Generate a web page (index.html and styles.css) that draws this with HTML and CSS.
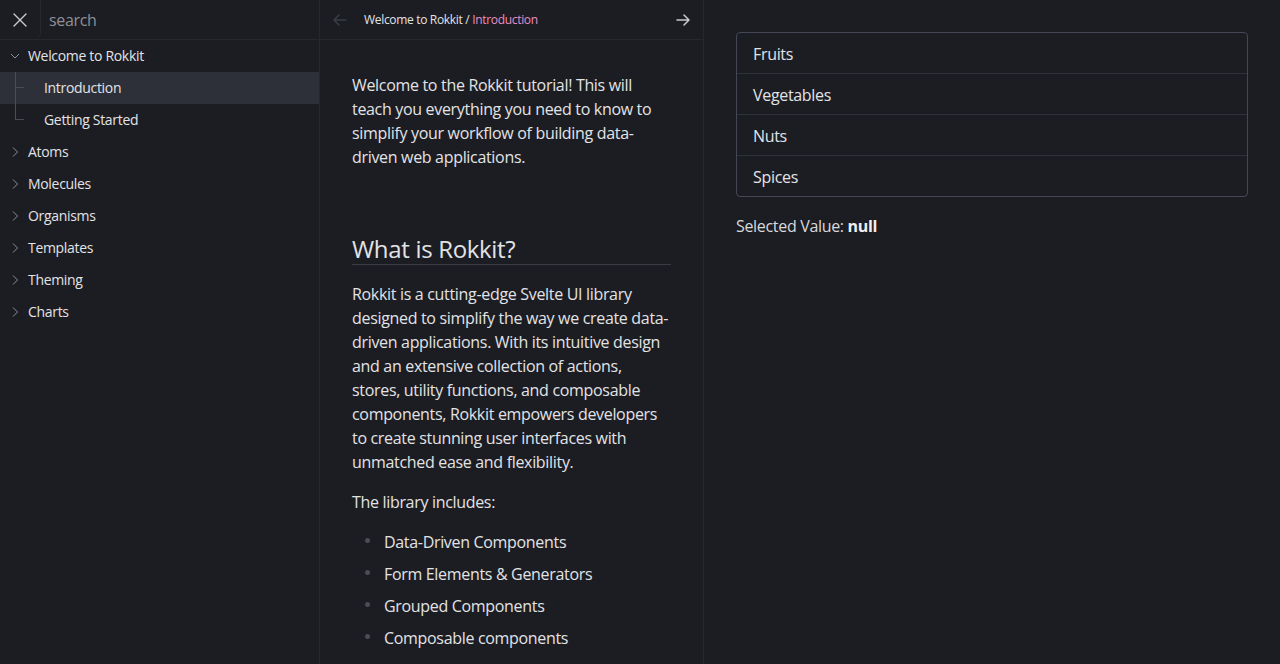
FILE: index.html
```html
<!DOCTYPE html>
<html>
<head>
<meta charset="utf-8">
<link rel="stylesheet" href="styles.css">
</head>
<body>
<div class="app">
  <aside class="sidebar">
    <div class="search-bar">
      <button class="close-btn" aria-label="close">
        <svg width="16" height="16" viewBox="0 0 16 16"><path d="M2 2L14 14M14 2L2 14" stroke="#c8cad0" stroke-width="1.4" fill="none" stroke-linecap="round"/></svg>
      </button>
      <div class="search-input">search</div>
    </div>
    <nav class="tree">
      <div class="node open">
        <div class="row">
          <svg class="chev" width="10" height="10" viewBox="0 0 10 10"><path d="M1 3L5 7L9 3" stroke="#8a8e98" stroke-width="1" fill="none"/></svg>
          <span>Welcome to Rokkit</span>
        </div>
        <div class="children">
          <div class="row child active"><span class="tick"></span><span>Introduction</span></div>
          <div class="row child"><span class="tick"></span><span>Getting Started</span></div>
        </div>
      </div>
      <div class="row"><svg class="chev" width="10" height="10" viewBox="0 0 10 10"><path d="M3 0.5L7.5 5L3 9.5" stroke="#8a8e98" stroke-width="1" fill="none"/></svg><span>Atoms</span></div>
      <div class="row"><svg class="chev" width="10" height="10" viewBox="0 0 10 10"><path d="M3 0.5L7.5 5L3 9.5" stroke="#8a8e98" stroke-width="1" fill="none"/></svg><span>Molecules</span></div>
      <div class="row"><svg class="chev" width="10" height="10" viewBox="0 0 10 10"><path d="M3 0.5L7.5 5L3 9.5" stroke="#8a8e98" stroke-width="1" fill="none"/></svg><span>Organisms</span></div>
      <div class="row"><svg class="chev" width="10" height="10" viewBox="0 0 10 10"><path d="M3 0.5L7.5 5L3 9.5" stroke="#8a8e98" stroke-width="1" fill="none"/></svg><span>Templates</span></div>
      <div class="row"><svg class="chev" width="10" height="10" viewBox="0 0 10 10"><path d="M3 0.5L7.5 5L3 9.5" stroke="#8a8e98" stroke-width="1" fill="none"/></svg><span>Theming</span></div>
      <div class="row"><svg class="chev" width="10" height="10" viewBox="0 0 10 10"><path d="M3 0.5L7.5 5L3 9.5" stroke="#8a8e98" stroke-width="1" fill="none"/></svg><span>Charts</span></div>
    </nav>
  </aside>

  <main class="content">
    <header class="crumbs">
      <svg class="nav-arrow prev" width="16" height="16" viewBox="0 0 16 16"><path d="M14 8H2M7 3L2 8L7 13" stroke="#3a3d46" stroke-width="1.5" fill="none" stroke-linecap="round" stroke-linejoin="round"/></svg>
      <div class="path">Welcome to Rokkit / <span class="current">Introduction</span></div>
      <svg class="nav-arrow next" width="16" height="16" viewBox="0 0 16 16"><path d="M2 8H14M9 3L14 8L9 13" stroke="#c8cad0" stroke-width="1.5" fill="none" stroke-linecap="round" stroke-linejoin="round"/></svg>
    </header>
    <article class="doc">
      <p>Welcome to the Rokkit tutorial! This will teach you everything you need to know to simplify your workflow of building data-driven web applications.</p>
      <h2>What is Rokkit?</h2>
      <p>Rokkit is a cutting-edge Svelte UI library designed to simplify the way we create data-driven applications. With its intuitive design and an extensive collection of actions, stores, utility functions, and composable components, Rokkit empowers developers to create stunning user interfaces with unmatched ease and flexibility.</p>
      <p>The library includes:</p>
      <ul>
        <li>Data-Driven Components</li>
        <li>Form Elements &amp; Generators</li>
        <li>Grouped Components</li>
        <li>Composable components</li>
        <li>Actions</li>
      </ul>
    </article>
  </main>

  <section class="preview">
    <div class="list">
      <div class="item">Fruits</div>
      <div class="item">Vegetables</div>
      <div class="item">Nuts</div>
      <div class="item">Spices</div>
    </div>
    <p class="selected-value">Selected Value: <strong>null</strong></p>
  </section>
</div>
</body>
</html>
```

FILE: styles.css
```css
* { box-sizing: border-box; }
html, body {
  margin: 0;
  padding: 0;
  height: 100%;
  overflow: hidden;
}
body {
  background: #1c1d22;
  color: #e2e3e6;
  font-family: "Open Sans", "Noto Sans", sans-serif;
  font-size: 16px;
  letter-spacing: -0.02em;
}
.app {
  display: flex;
  height: 664px;
  overflow: hidden;
}

/* Sidebar */
.sidebar {
  width: 320px;
  flex-shrink: 0;
  border-right: 1px solid #26282e;
  display: flex;
  flex-direction: column;
}
.search-bar {
  display: flex;
  height: 40px;
  flex-shrink: 0;
  border-bottom: 1px solid #26282e;
}
.close-btn {
  width: 41px;
  height: 39px;
  background: transparent;
  border: none;
  border-right: 1px solid #26282e;
  border-bottom-right-radius: 6px;
  display: flex;
  align-items: center;
  justify-content: center;
  padding: 0;
}
.search-input {
  flex: 1;
  display: flex;
  align-items: center;
  padding-left: 8px;
  color: #8e9097;
  font-size: 16px;
}
.tree { display: flex; flex-direction: column; }
.row {
  height: 32px;
  flex-shrink: 0;
  display: flex;
  align-items: center;
  padding: 0 0 1px 10px;
  font-size: 14px;
  color: #e2e3e6;
}
.chev { margin-right: 8px; flex-shrink: 0; }
.children { position: relative; }
.children::before {
  content: "";
  position: absolute;
  left: 15px;
  top: 0;
  height: 48px;
  width: 1px;
  background: #4a4d56;
}
.row.child { padding-left: 15px; }
.tick {
  width: 9px;
  height: 1px;
  background: #4a4d56;
  margin-right: 20px;
  flex-shrink: 0;
}
.row.active { background: #2d3039; }

/* Content */
.content {
  width: 384px;
  flex-shrink: 0;
  border-right: 1px solid #26282e;
  display: flex;
  flex-direction: column;
}
.crumbs {
  height: 40px;
  flex-shrink: 0;
  border-bottom: 1px solid #26282e;
  display: flex;
  align-items: center;
  padding: 0 12px 0 12px;
}
.nav-arrow { flex-shrink: 0; }
.path {
  flex: 1;
  margin-left: 16px;
  font-size: 12px;
  color: #e2e3e6;
}
.current { color: #e98ec6; }
.doc {
  padding: 33px 32px 0 32px;
  line-height: 24px;
}
.doc p { margin: 0 0 16px 0; }
.doc h2 {
  font-size: 24px;
  font-weight: 400;
  line-height: 31px;
  margin: 64px 0 17px 0;
  border-bottom: 1px solid #3a3c44;
}
.doc ul {
  list-style: none;
  margin: -4px 0 0 0;
  padding: 0 0 0 32px;
}
.doc li {
  height: 32px;
  line-height: 32px;
  position: relative;
}
.doc li::before {
  content: "";
  position: absolute;
  left: -19px;
  top: 12px;
  width: 5px;
  height: 5px;
  border-radius: 50%;
  background: #4a4d57;
}

/* Preview */
.preview {
  flex: 1;
  padding: 32px;
}
.list {
  border: 1px solid #434756;
  border-radius: 4px;
  display: flex;
  flex-direction: column;
}
.item {
  height: 41px;
  display: flex;
  align-items: center;
  padding: 1px 0 0 16px;
  border-bottom: 1px solid #2f323b;
  color: #e2e3e6;
}
.item:last-child { border-bottom: none; height: 40px; }
.selected-value {
  margin: 17px 0 0 0;
  line-height: 24px;
  color: #d8d9dc;
}
.selected-value strong { font-weight: 700; color: #eeeff1; }
```
